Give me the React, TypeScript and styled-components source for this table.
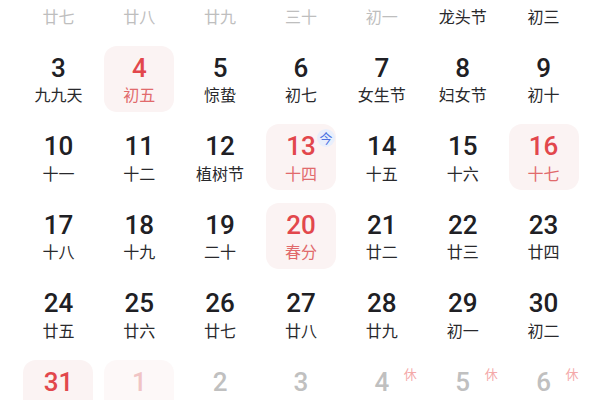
import React from "react";
import styled, { createGlobalStyle } from "styled-components";

const Global = createGlobalStyle`
  html, body { margin: 0; padding: 0; background: #fff; }
  body { font-family: Roboto, "Noto Sans CJK SC", sans-serif; }
`;

type Tone = "normal" | "muted" | "red" | "pale";

interface Day {
  n: string;
  l: string;
  tone: Tone;
  box?: "solid" | "faint";
  today?: boolean;
  rest?: boolean;
}

const numColor: Record<Tone, string> = {
  normal: "#202024",
  muted: "#c0c0c0",
  red: "#e2474c",
  pale: "#f0c4c5",
};
const lunarColor: Record<Tone, string> = {
  normal: "#29292c",
  muted: "#bebebe",
  red: "#e16a6c",
  pale: "#f0c8c8",
};

const Viewport = styled.div`
  width: 600px;
  height: 400px;
  overflow: hidden;
`;

const Grid = styled.div`
  display: grid;
  grid-template-columns: repeat(7, 1fr);
  grid-auto-rows: 78.5px;
  padding: 0 16px 0 18px;
  margin-top: -39px;
`;

const Cell = styled.div`
  display: flex;
  align-items: center;
  justify-content: center;
`;

const Box = styled.div<{ $box?: "solid" | "faint" }>`
  position: relative;
  width: 70px;
  height: 66px;
  border-radius: 13px;
  box-sizing: border-box;
  padding-top: 8px;
  display: flex;
  flex-direction: column;
  align-items: center;
  background: ${(p) =>
    p.$box === "solid" ? "#fbf3f3" : p.$box === "faint" ? "#fdf8f8" : "transparent"};
`;

const Num = styled.div<{ $tone: Tone }>`
  font-family: Roboto, "Noto Sans", sans-serif;
  font-weight: 500;
  font-size: 26px;
  line-height: 28px;
  height: 28px;
  color: ${(p) => numColor[p.$tone]};
`;

const Lunar = styled.div<{ $tone: Tone }>`
  margin-top: 2.5px;
  font-family: "Noto Sans CJK SC", sans-serif;
  font-size: 16px;
  line-height: 20px;
  color: ${(p) => lunarColor[p.$tone]};
`;

const TodayBadge = styled.span`
  position: absolute;
  right: 1px;
  top: 5px;
  width: 18px;
  height: 18px;
  border-radius: 9px;
  background: #e9effc;
  color: #4e73e2;
  font-family: "Noto Sans CJK SC", sans-serif;
  font-size: 13px;
  line-height: 18px;
  text-align: center;
`;

const RestBadge = styled.span`
  position: absolute;
  right: 0px;
  top: 6px;
  color: #f4a9a9;
  font-family: "Noto Sans CJK SC", sans-serif;
  font-size: 13px;
  line-height: 15px;
`;

const d = (n: string, l: string, tone: Tone = "normal", extra: Partial<Day> = {}): Day => ({
  n,
  l,
  tone,
  ...extra,
});

const days: Day[] = [
  d("25", "廿七", "muted"),
  d("26", "廿八", "muted"),
  d("27", "廿九", "muted"),
  d("28", "三十", "muted"),
  d("29", "初一", "muted"),
  d("1", "龙头节"),
  d("2", "初三"),

  d("3", "九九天"),
  d("4", "初五", "red", { box: "solid" }),
  d("5", "惊蛰"),
  d("6", "初七"),
  d("7", "女生节"),
  d("8", "妇女节"),
  d("9", "初十"),

  d("10", "十一"),
  d("11", "十二"),
  d("12", "植树节"),
  d("13", "十四", "red", { box: "solid", today: true }),
  d("14", "十五"),
  d("15", "十六"),
  d("16", "十七", "red", { box: "solid" }),

  d("17", "十八"),
  d("18", "十九"),
  d("19", "二十"),
  d("20", "春分", "red", { box: "solid" }),
  d("21", "廿二"),
  d("22", "廿三"),
  d("23", "廿四"),

  d("24", "廿五"),
  d("25", "廿六"),
  d("26", "廿七"),
  d("27", "廿八"),
  d("28", "廿九"),
  d("29", "初一"),
  d("30", "初二"),

  d("31", "廿三", "red", { box: "solid" }),
  d("1", "愚人节", "pale", { box: "faint" }),
  d("2", "廿四", "muted"),
  d("3", "廿五", "muted"),
  d("4", "清明", "muted", { rest: true }),
  d("5", "廿七", "muted", { rest: true }),
  d("6", "廿八", "muted", { rest: true }),
];

export default function App() {
  return (
    <Viewport>
      <Global />
      <Grid>
        {days.map((day, i) => (
          <Cell key={i}>
            <Box $box={day.box}>
              <Num $tone={day.tone}>{day.n}</Num>
              <Lunar $tone={day.tone}>{day.l}</Lunar>
              {day.today && <TodayBadge>今</TodayBadge>}
              {day.rest && <RestBadge>休</RestBadge>}
            </Box>
          </Cell>
        ))}
      </Grid>
    </Viewport>
  );
}
